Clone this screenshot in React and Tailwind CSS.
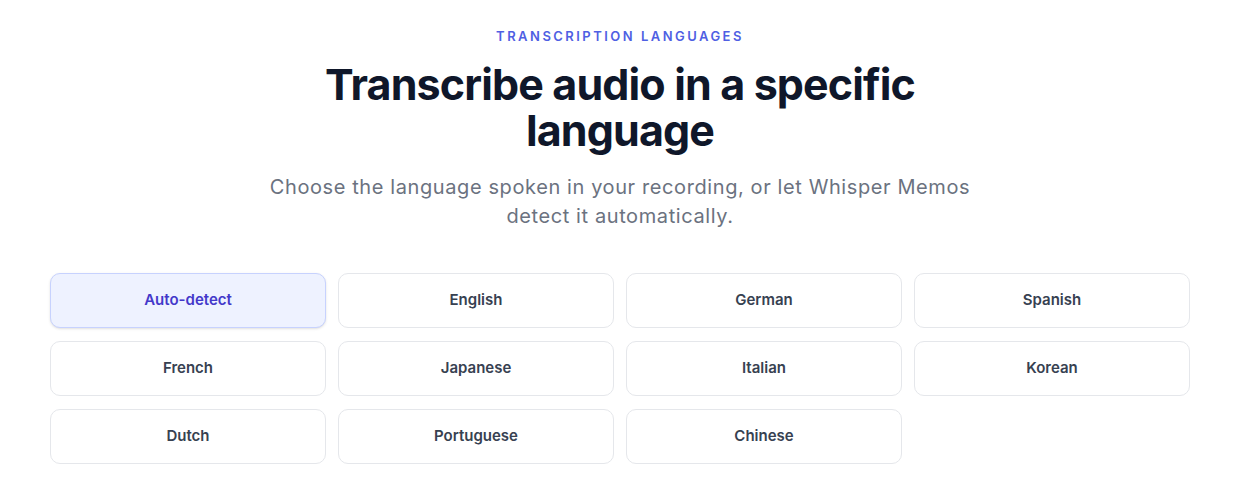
const languages = [
  "Auto-detect",
  "English",
  "German",
  "Spanish",
  "French",
  "Japanese",
  "Italian",
  "Korean",
  "Dutch",
  "Portuguese",
  "Chinese",
];

export default function App() {
  const selected = "Auto-detect";

  return (
    <div className="min-h-screen bg-white font-['Inter',sans-serif]">
      <section className="mx-auto max-w-[1140px] pt-[28px] pb-[20px]">
        <div className="flex flex-col items-center text-center">
          <p className="text-[13px] leading-[16px] font-semibold tracking-[0.19em] text-[#4f5fe3]">
            TRANSCRIPTION LANGUAGES
          </p>
          <h2 className="mt-[17px] max-w-[660px] text-[43px] leading-[46px] font-bold tracking-[-0.02em] text-[#0f172a]">
            Transcribe audio in a specific language
          </h2>
          <p className="mt-[20px] max-w-[760px] text-[20px] leading-[29px] tracking-[0.03em] text-[#6b7280]">
            Choose the language spoken in your recording, or let Whisper Memos
            detect it automatically.
          </p>
        </div>

        <div className="mt-[42px] grid grid-cols-4 gap-x-[12px] gap-y-[13px]">
          {languages.map((lang) => {
            const active = lang === selected;
            return (
              <button
                key={lang}
                className={
                  active
                    ? "h-[55px] rounded-[10px] border border-[#c7d2fe] bg-[#eef2ff] text-[15px] font-semibold text-[#4338ca] shadow-sm"
                    : "h-[55px] rounded-[10px] border border-[#e5e7eb] bg-white text-[15px] font-semibold text-[#374151]"
                }
              >
                {lang}
              </button>
            );
          })}
        </div>
      </section>
    </div>
  );
}
